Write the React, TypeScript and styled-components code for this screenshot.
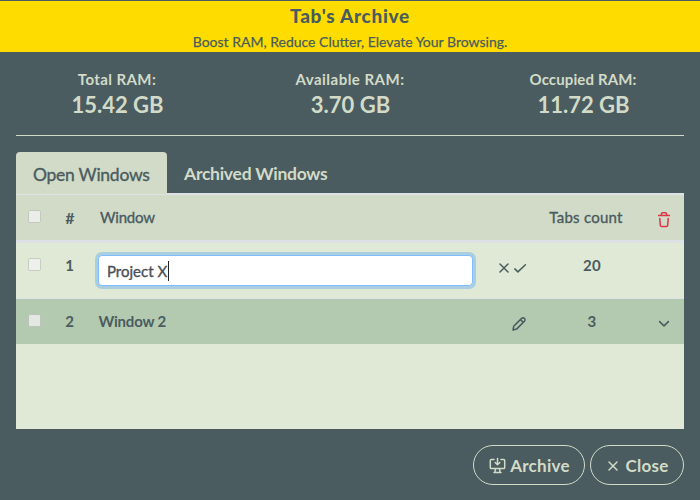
import React, { useState } from 'react';
import styled, { createGlobalStyle } from 'styled-components';

const slate = '#4a5c5f';
const sage = '#d2dbc8';
const pale = '#dfe9d5';
const line = '#dee2e6';

const GlobalStyle = createGlobalStyle`
  * { box-sizing: border-box; }
  body {
    margin: 0;
    background: ${slate};
    color: ${slate};
    font-family: Lato, sans-serif;
    overflow: hidden;
  }
`;

const Page = styled.div`
  display: flex;
  flex-direction: column;
  width: 700px;
  height: 500px;
`;

const Banner = styled.header`
  display: flex;
  flex-direction: column;
  align-items: center;
  height: 52px;
  border-top: 1px solid ${slate};
  background: #ffdc00;
  white-space: nowrap;
`;

const Title = styled.h1`
  margin: 0;
  font-size: 19px;
  font-weight: 900;
  line-height: 30px;
  letter-spacing: 0.7px;
`;

const Tagline = styled.p`
  margin: 0;
  font-size: 14px;
  line-height: 21px;
  -webkit-text-stroke: 0.25px currentColor;
`;

const Stats = styled.section`
  display: grid;
  grid-template-columns: repeat(3, 233px);
  justify-content: center;
  height: 83px;
  padding-top: 17px;
  color: ${sage};
  text-align: center;
`;

const StatLabel = styled.div<{ $track: number }>`
  font-size: 15px;
  font-weight: 700;
  line-height: 20px;
  letter-spacing: ${(p) => p.$track}px;
`;

const StatValue = styled.div`
  padding-left: 1px;
  font-size: 22px;
  font-weight: 700;
  line-height: 32px;
`;

const Rule = styled.hr`
  width: 668px;
  height: 1px;
  margin: 0 16px 16px;
  border: 0;
  background: ${sage};
`;

const TabBar = styled.nav`
  display: flex;
  height: 42px;
  margin: 0 16px;
  border-bottom: 1px solid ${line};
`;

const Tab = styled.button<{ $active?: boolean }>`
  height: ${(p) => (p.$active ? 42 : 41)}px;
  width: ${(p) => (p.$active ? 151 : 178)}px;
  padding: 2px 0 0 17px;
  border: 0;
  border-radius: 4px 4px 0 0;
  background: ${(p) => (p.$active ? sage : 'transparent')};
  color: ${(p) => (p.$active ? slate : sage)};
  font-family: inherit;
  font-size: 17.5px;
  font-weight: ${(p) => (p.$active ? 400 : 700)};
  -webkit-text-stroke: ${(p) => (p.$active ? '0.35px currentColor' : '0')};
  letter-spacing: -0.26px;
  text-align: left;
  white-space: nowrap;
`;

const Table = styled.main`
  height: 235px;
  margin: 0 16px;
  background: ${pale};
  font-size: 15px;
`;

const Row = styled.div<{ $kind: 'head' | 'edit' | 'plain' }>`
  display: grid;
  grid-template-columns: 37px 34px 388px 52px 144px 13px;
  height: ${(p) => ({ head: 49, edit: 56, plain: 45 })[p.$kind]}px;
  border-top: ${(p) => (p.$kind === 'head' ? `1px solid ${line}` : '0')};
  border-bottom: ${(p) => ({ head: `3px solid ${line}`, edit: `1px solid ${line}`, plain: '0' })[p.$kind]};
  background: ${(p) => ({ head: sage, edit: pale, plain: '#b3c9b0' })[p.$kind]};
`;

const Check = styled.input`
  appearance: none;
  width: 13px;
  height: 13px;
  margin: 15px 0 0 12px;
  border: 1px solid #bfc4bd;
  border-radius: 2px;
  background: #f3f3f3;
  opacity: 0.75;
`;

const Index = styled.div`
  width: 33px;
  font-weight: 700;
  line-height: 45px;
  text-align: center;
`;

const HeadIndex = styled(Index)`
  width: 34px;
  font-size: 16px;
`;

const Name = styled.div<{ $bold?: boolean }>`
  padding-left: ${(p) => (p.$bold ? 11.5 : 13)}px;
  font-weight: ${(p) => (p.$bold ? 700 : 400)};
  -webkit-text-stroke: ${(p) => (p.$bold ? '0' : '0.35px currentColor')};
  line-height: 45px;
  letter-spacing: -0.2px;
`;

const NameInput = styled.input`
  display: block;
  width: 375px;
  height: 31px;
  margin: 12px 0 0 11px;
  padding: 1px 8px 0;
  border: 1px solid #80bdff;
  border-radius: 4px;
  outline: 0;
  background: #fff;
  box-shadow: 0 0 0 3px #a8cee0;
  color: #495057;
  font: 400 15px Lato, sans-serif;
  -webkit-text-stroke: 0.35px currentColor;
`;

const NameField = styled.div`
  position: relative;
`;

const Caret = styled.span`
  position: absolute;
  top: 18px;
  left: 81px;
  width: 1px;
  height: 20px;
  background: #222;
`;

const Actions = styled.div<{ $top: number }>`
  display: flex;
  justify-content: flex-end;
  gap: 2px;
  padding: ${(p) => p.$top}px 0 0;
`;

const Count = styled.div<{ $bold?: boolean }>`
  width: 144px;
  padding-right: ${(p) => (p.$bold ? 14 : 26)}px;
  font-weight: ${(p) => (p.$bold ? 700 : 400)};
  -webkit-text-stroke: ${(p) => (p.$bold ? '0' : '0.35px currentColor')};
  line-height: 45px;
  letter-spacing: 0.25px;
  text-align: center;
`;

const RowEnd = styled.div<{ $top: number }>`
  display: flex;
  justify-content: center;
  margin-left: -27px;
  padding-top: ${(p) => p.$top}px;
`;

const Footer = styled.footer`
  display: flex;
  justify-content: flex-end;
  gap: 5px;
  padding: 16px 16px 0;
`;

const PillButton = styled.button<{ $width: number; $gap: number }>`
  display: flex;
  align-items: center;
  justify-content: center;
  gap: ${(p) => p.$gap}px;
  width: ${(p) => p.$width}px;
  height: 40px;
  padding: 1px 0 0 1px;
  border: 1px solid ${sage};
  border-radius: 20px;
  background: transparent;
  color: ${sage};
  font: 700 17px Lato, sans-serif;
  letter-spacing: 0.25px;
`;

const Icon = styled.svg`
  flex: none;
  display: block;
  fill: none;
  stroke-linecap: round;
  stroke-linejoin: round;
  stroke-width: 1.5;
`;

const CrossIcon = () => (
  <Icon width="14" height="16" viewBox="0 0 14 16" stroke="currentColor"><path d="M3 4l8 8M11 4l-8 8" /></Icon>
);
const CheckIcon = () => (
  <Icon width="14" height="16" viewBox="0 0 14 16" stroke="currentColor"><path d="M1.8 8.9l3.1 3L12.4 4.7" /></Icon>
);
const PencilIcon = () => (
  <Icon width="16" height="16" viewBox="0 0 16 16" stroke="currentColor">
    <path d="M2 14l.7-3.7L10.6 2.4a1.9 1.9 0 0 1 2.8 0a1.9 1.9 0 0 1 0 2.8L5.6 13.1zM9.6 3.8l2.6 2.6" />
  </Icon>
);
const ChevronIcon = () => (
  <Icon width="12" height="8" viewBox="0 0 12 8" stroke="currentColor"><path d="M1.6 1.6L6 5.9l4.4-4.3" /></Icon>
);
const TrashIcon = () => (
  <Icon width="14" height="17" viewBox="0 0 14 17" stroke="#dc3545">
    <path d="M1.6 4.6h10.8M4.4 4.3V3.1Q4.4 1.7 5.8 1.7h2.4Q9.6 1.7 9.6 3.1v1.2M2.8 7.6l.5 6.6q.1 1.2 1.2 1.2h5q1.1 0 1.2-1.2l.5-6.6" />
  </Icon>
);
const ArchiveIcon = () => (
  <Icon width="17" height="17" viewBox="0 0 17 17" stroke="currentColor">
    <path d="M5 2.5H2.3Q1.3 2.5 1.3 3.5v6.9q0 1.1 1 1.1h12.4q1 0 1-1.1V3.5q0-1-1-1H12M8.5 1.5v6M6.2 5.5l2.3 2.2 2.3-2.2M6.5 11.8l-.6 3.4M10.5 11.8l.6 3.4M5 15.5h7" />
  </Icon>
);

export default function App() {
  const [name, setName] = useState('Project X');
  return (
    <Page>
      <GlobalStyle />
      <Banner>
        <Title>Tab's Archive</Title>
        <Tagline>Boost RAM, Reduce Clutter, Elevate Your Browsing.</Tagline>
      </Banner>
      <Stats>
        <div><StatLabel $track={0.4}>Total RAM:</StatLabel><StatValue>15.42 GB</StatValue></div>
        <div><StatLabel $track={0.48}>Available RAM:</StatLabel><StatValue>3.70 GB</StatValue></div>
        <div><StatLabel $track={0.12}>Occupied RAM:</StatLabel><StatValue>11.72 GB</StatValue></div>
      </Stats>
      <Rule />
      <TabBar>
        <Tab $active>Open Windows</Tab>
        <Tab>Archived Windows</Tab>
      </TabBar>
      <Table>
        <Row $kind="head">
          <Check type="checkbox" />
          <HeadIndex>#</HeadIndex>
          <Name>Window</Name>
          <span />
          <Count>Tabs count</Count>
          <RowEnd $top={16}><TrashIcon /></RowEnd>
        </Row>
        <Row $kind="edit">
          <Check type="checkbox" />
          <Index>1</Index>
          <NameField>
            <NameInput value={name} onChange={(e) => setName(e.target.value)} />
            <Caret />
          </NameField>
          <Actions $top={17}><CrossIcon /><CheckIcon /></Actions>
          <Count $bold>20</Count>
        </Row>
        <Row $kind="plain">
          <Check type="checkbox" />
          <Index>2</Index>
          <Name $bold>Window 2</Name>
          <Actions $top={17}><PencilIcon /></Actions>
          <Count $bold>3</Count>
          <RowEnd $top={21}><ChevronIcon /></RowEnd>
        </Row>
      </Table>
      <Footer>
        <PillButton $width={112} $gap={4}><ArchiveIcon />Archive</PillButton>
        <PillButton $width={94} $gap={5}><CrossIcon />Close</PillButton>
      </Footer>
    </Page>
  );
}
